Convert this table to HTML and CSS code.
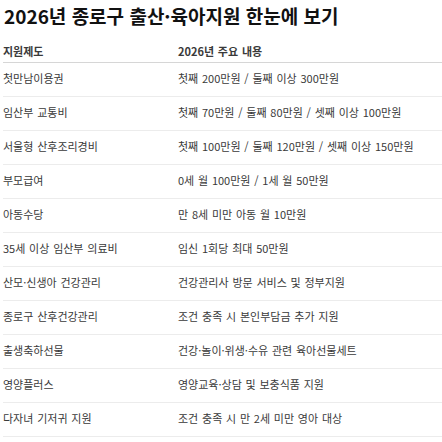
FILE: index.html
```html
<!DOCTYPE html>
<html lang="ko">
<head>
<meta charset="utf-8">
<title>2026년 종로구 출산·육아지원 한눈에 보기</title>
<link rel="stylesheet" href="styles.css">
</head>
<body>
<main class="page">
  <h1 class="title">2026년 종로구 출산·육아지원 한눈에 보기</h1>
  <table class="support-table">
    <colgroup><col class="col-name"><col class="col-desc"></colgroup>
    <thead>
      <tr><th>지원제도</th><th>2026년 주요 내용</th></tr>
    </thead>
    <tbody>
      <tr><td>첫만남이용권</td><td>첫째 200만원 / 둘째 이상 300만원</td></tr>
      <tr><td>임산부 교통비</td><td>첫째 70만원 / 둘째 80만원 / 셋째 이상 100만원</td></tr>
      <tr><td>서울형 산후조리경비</td><td>첫째 100만원 / 둘째 120만원 / 셋째 이상 150만원</td></tr>
      <tr><td>부모급여</td><td>0세 월 100만원 / 1세 월 50만원</td></tr>
      <tr><td>아동수당</td><td>만 8세 미만 아동 월 10만원</td></tr>
      <tr><td>35세 이상 임산부 의료비</td><td>임신 1회당 최대 50만원</td></tr>
      <tr><td>산모·신생아 건강관리</td><td>건강관리사 방문 서비스 및 정부지원</td></tr>
      <tr><td>종로구 산후건강관리</td><td>조건 충족 시 본인부담금 추가 지원</td></tr>
      <tr><td>출생축하선물</td><td>건강·놀이·위생·수유 관련 육아선물세트</td></tr>
      <tr><td>영양플러스</td><td>영양교육·상담 및 보충식품 지원</td></tr>
      <tr><td>다자녀 기저귀 지원</td><td>조건 충족 시 만 2세 미만 영아 대상</td></tr>
    </tbody>
  </table>
</main>
</body>
</html>
```

FILE: styles.css
```css
html, body {
  margin: 0;
  padding: 0;
  background: #ffffff;
}

.page {
  padding: 0 0 0 3px;
  font-family: "Noto Sans CJK KR", "Noto Sans", sans-serif;
  color: #3a3a3a;
}

.title {
  margin: 4px 0 9px 1px;
  font-size: 19px;
  line-height: 24px;
  font-weight: 700;
  color: #111111;
}

.support-table {
  width: 439px;
  table-layout: fixed;
  border-collapse: collapse;
  font-size: 11px;
  line-height: 13px;
  word-spacing: 0.7px;
}

.col-name {
  width: 175px;
}

.support-table th {
  text-align: left;
  font-weight: 700;
  color: #3a3a3a;
  padding: 8px 0 4px 0;
  border-bottom: 1px solid #d6d6d6;
}

.support-table td {
  padding: 9px 0 11px 0;
  border-bottom: 1px solid #ececec;
  vertical-align: top;
}
```
